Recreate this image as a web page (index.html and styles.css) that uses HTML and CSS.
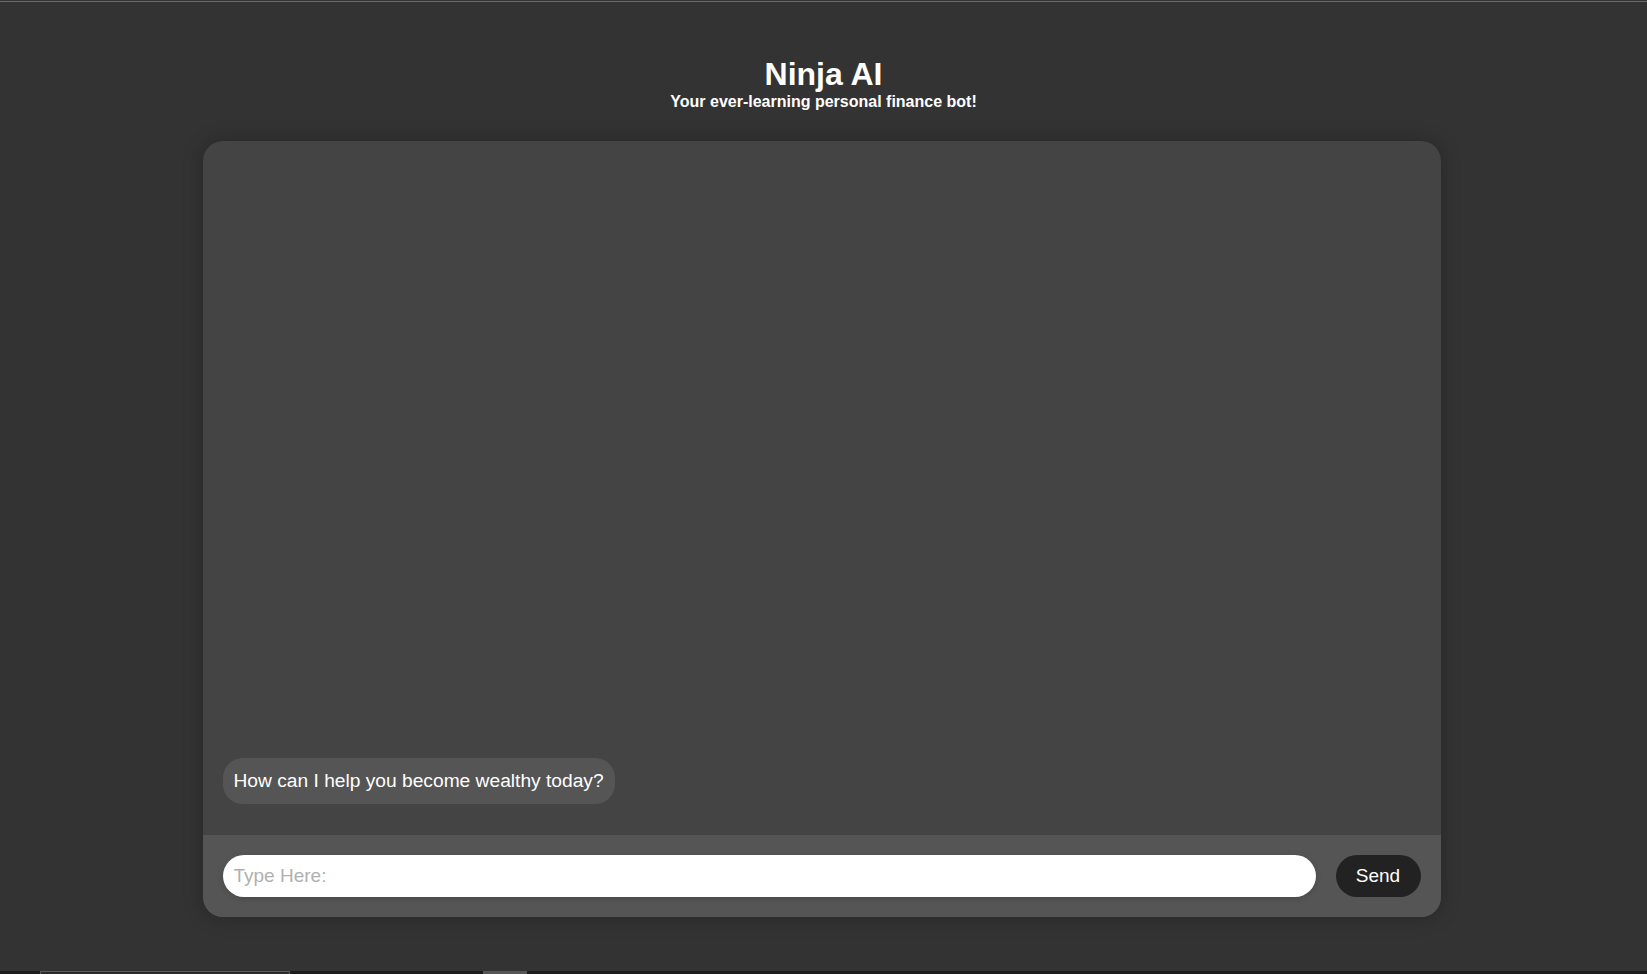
FILE: index.html
```html
<!DOCTYPE html>
<html lang="en">
<head>
<meta charset="utf-8">
<title>Ninja AI</title>
<link rel="stylesheet" href="styles.css">
</head>
<body>
<div class="topline"></div>
<header class="header">
  <h1 class="title">Ninja AI</h1>
  <p class="subtitle">Your ever-learning personal finance bot!</p>
</header>
<main class="chat">
  <section class="messages">
    <div class="bubble">How can I help you become wealthy today?</div>
  </section>
  <form class="composer">
    <input class="field" type="text" placeholder="Type Here:">
    <button class="send" type="button">Send</button>
  </form>
</main>
<div class="taskbar">
  <span class="tb-item tb-wide"></span>
  <span class="tb-item tb-small"></span>
</div>
</body>
</html>
```

FILE: styles.css
```css
html, body {
  margin: 0;
  padding: 0;
  height: 100%;
}

body {
  background: #333333;
  font-family: "Liberation Sans", Arial, sans-serif;
  color: #ffffff;
  overflow: hidden;
}

.topline {
  height: 1px;
  margin-top: 1px;
  background: #6a6a6a;
}

.header {
  text-align: center;
  padding-top: 54px;
  padding-bottom: 30px;
}

.title {
  margin: 0;
  font-size: 32px;
  font-weight: bold;
  line-height: 37px;
}

.subtitle {
  margin: 0;
  font-size: 16px;
  font-weight: bold;
  line-height: 18px;
}

.chat {
  width: 1238px;
  height: 776px;
  margin: 0 auto;
  position: relative;
  left: -2px;
  background: #444444;
  border-radius: 20px;
  overflow: hidden;
  display: flex;
  flex-direction: column;
  box-shadow: 0 0 20px rgba(0, 0, 0, 0.25);
}

.messages {
  flex: 1;
  display: flex;
  flex-direction: column;
  justify-content: flex-end;
  align-items: flex-start;
  padding: 20px 20px 31px 20px;
}

.bubble {
  background: #555555;
  border-radius: 20px;
  padding: 12px 11px;
  font-size: 19.2px;
  line-height: 22px;
}

.composer {
  margin: 0;
  height: 82px;
  box-sizing: border-box;
  background: #555555;
  padding: 20px;
  display: flex;
  gap: 20px;
  align-items: center;
}

.field {
  flex: 1;
  height: 42px;
  box-sizing: border-box;
  border: none;
  outline: none;
  border-radius: 21px;
  padding: 0 11px;
  font-family: inherit;
  font-size: 19px;
  color: #222;
  background: #ffffff;
  box-shadow: 0 2px 6px rgba(0, 0, 0, 0.15);
}

.field::placeholder {
  color: #b0b0b0;
}

.send {
  width: 85px;
  height: 42px;
  border: none;
  border-radius: 21px;
  background: #222222;
  color: #ffffff;
  font-family: inherit;
  font-size: 19px;
  padding: 0;
}

.taskbar {
  position: fixed;
  left: 0;
  right: 0;
  bottom: 0;
  height: 3px;
  background: #1c1c1c;
}

.tb-item {
  position: absolute;
  top: 0;
  height: 3px;
}

.tb-wide {
  left: 40px;
  width: 250px;
  border-top: 1px solid #5a5a5a;
  border-left: 1px solid #5a5a5a;
  border-right: 1px solid #5a5a5a;
  box-sizing: border-box;
  background: #2a2a2a;
}

.tb-small {
  left: 483px;
  width: 44px;
  background: #555555;
}
```
